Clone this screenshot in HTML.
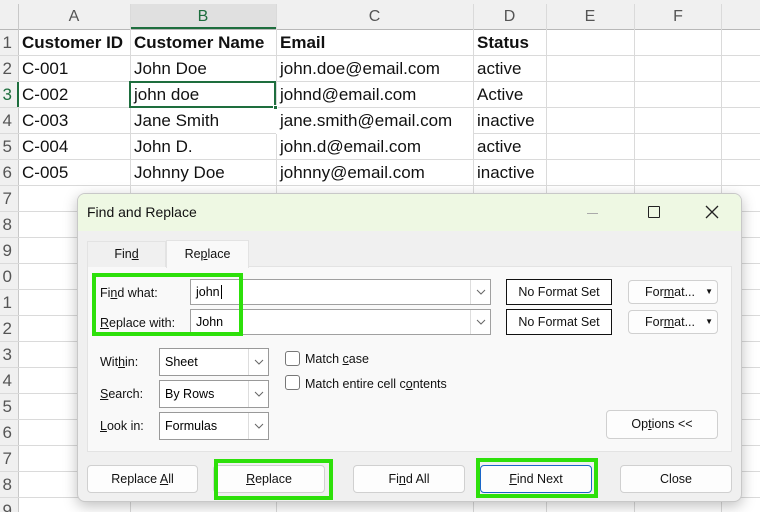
<!DOCTYPE html>
<html><head><meta charset="utf-8"><style>
*{box-sizing:border-box;margin:0;padding:0}
body{width:760px;height:512px;overflow:hidden;background:#fff;font-family:"Liberation Sans",sans-serif;position:relative}
.a{position:absolute}
.vl{position:absolute;top:4px;bottom:0;width:1px;background:#dadada}
.hl{position:absolute;left:0;right:0;height:1px;background:#dadada}
.ch{position:absolute;top:4px;height:25px;line-height:25px;text-align:center;font-size:16px;color:#555;background:#f0f0f0}
.c{position:absolute;font-size:17px;color:#111;height:26px;line-height:26px;padding-left:4px;white-space:nowrap}
.rn{position:absolute;left:-18px;width:30px;text-align:right;font-size:17px;color:#555;height:26px;line-height:26px;padding-right:0}
.d{font-size:12.5px;color:#111}
.btn{position:absolute;background:#fdfdfd;border:1px solid #d0d0d0;border-radius:4px;text-align:center;font-size:12.5px;color:#111}
.inp{position:absolute;background:#fff;border:1px solid #a0a0a0;font-size:12.5px;padding-left:5px}
.dd{position:absolute;right:0;top:0;bottom:0;width:20px;border-left:1px solid #ddd;background:#fff}
.dd svg{position:absolute;left:5px;top:50%;margin-top:-3px}
.gb{position:absolute;border:4px solid #2de00a}
.cb{position:absolute;width:15px;height:15px;border:1px solid #777;border-radius:3px;background:#fff}
u{text-decoration:underline}
</style></head><body>
<div class="a" style="left:0;top:0;width:760px;height:29px;background:#f0f0f0"></div>
<div class="a" style="left:0;top:0;width:18px;height:512px;background:#f0f0f0;overflow:hidden">
<div class="rn" style="top:30px">1</div><div class="rn" style="top:56px">2</div><div class="rn" style="top:82px;color:#1e6e3e">3</div><div class="rn" style="top:108px">4</div><div class="rn" style="top:134px">5</div><div class="rn" style="top:160px">6</div><div class="rn" style="top:186px">7</div><div class="rn" style="top:212px">8</div><div class="rn" style="top:238px">9</div><div class="rn" style="top:264px">0</div><div class="rn" style="top:290px">1</div><div class="rn" style="top:316px">2</div><div class="rn" style="top:342px">3</div><div class="rn" style="top:368px">4</div><div class="rn" style="top:394px">5</div><div class="rn" style="top:420px">6</div><div class="rn" style="top:446px">7</div><div class="rn" style="top:472px">8</div><div class="rn" style="top:498px">9</div>
</div>
<div class="ch" style="left:18px;width:112px">A</div>
<div class="ch" style="left:130px;width:146px;background:#e0e0e0;color:#1e6e3e;border-bottom:2px solid #1e6e3e">B</div>
<div class="ch" style="left:276px;width:197px">C</div>
<div class="ch" style="left:473px;width:73px">D</div>
<div class="ch" style="left:546px;width:88px">E</div>
<div class="ch" style="left:634px;width:88px">F</div>
<div class="a" style="left:0;top:29px;width:760px;height:1px;background:#b8b8b8"></div>
<div class="vl" style="left:18px;background:#c8c8c8"></div>
<div class="vl" style="left:130px"></div><div class="vl" style="left:276px"></div><div class="vl" style="left:473px"></div><div class="vl" style="left:546px"></div><div class="vl" style="left:634px"></div><div class="vl" style="left:721px"></div>
<div class="hl" style="top:55px"></div><div class="hl" style="top:81px"></div><div class="hl" style="top:107px"></div><div class="hl" style="top:133px"></div><div class="hl" style="top:159px"></div><div class="hl" style="top:185px"></div><div class="hl" style="top:211px"></div><div class="hl" style="top:237px"></div><div class="hl" style="top:263px"></div><div class="hl" style="top:289px"></div><div class="hl" style="top:315px"></div><div class="hl" style="top:341px"></div><div class="hl" style="top:367px"></div><div class="hl" style="top:393px"></div><div class="hl" style="top:419px"></div><div class="hl" style="top:445px"></div><div class="hl" style="top:471px"></div><div class="hl" style="top:497px"></div>
<div class="a" style="left:17px;top:82px;width:2px;height:25px;background:#1e6e3e"></div>
<div class="c" style="left:18px;top:30px;font-weight:bold">Customer ID</div>
<div class="c" style="left:130px;top:30px;font-weight:bold">Customer Name</div>
<div class="c" style="left:276px;top:30px;font-weight:bold">Email</div>
<div class="c" style="left:473px;top:30px;font-weight:bold">Status</div>
<div class="c" style="left:18px;top:56px">C-001</div><div class="c" style="left:130px;top:56px">John Doe</div><div class="c" style="left:276px;top:56px">john.doe@email.com</div><div class="c" style="left:473px;top:56px">active</div>
<div class="c" style="left:18px;top:82px">C-002</div><div class="c" style="left:130px;top:82px">john doe</div><div class="c" style="left:276px;top:82px">johnd@email.com</div><div class="c" style="left:473px;top:82px">Active</div>
<div class="c" style="left:18px;top:108px">C-003</div><div class="c" style="left:130px;top:108px">Jane Smith</div><div class="c" style="left:276px;top:108px;background:#fff;width:197px">jane.smith@email.com</div><div class="c" style="left:473px;top:108px">inactive</div>
<div class="c" style="left:18px;top:134px">C-004</div><div class="c" style="left:130px;top:134px">John D.</div><div class="c" style="left:276px;top:134px">john.d@email.com</div><div class="c" style="left:473px;top:134px">active</div>
<div class="c" style="left:18px;top:160px">C-005</div><div class="c" style="left:130px;top:160px">Johnny Doe</div><div class="c" style="left:276px;top:160px">johnny@email.com</div><div class="c" style="left:473px;top:160px">inactive</div>
<div class="a" style="left:129px;top:81px;width:147px;height:27px;border:2px solid #1e6e3e"></div>
<div class="a" style="left:273px;top:105px;width:5px;height:5px;background:#1e6e3e;border:1px solid #fff"></div>

<div class="a" style="left:77px;top:193px;width:665px;height:309px;background:#f0f0f0;border:1px solid #c8c8c8;border-radius:8px;box-shadow:0 4px 14px rgba(0,0,0,.25);overflow:hidden">
  <div class="a" style="left:0;top:0;width:665px;height:37px;background:#eef8e3"></div>
  <div class="a d" style="left:9px;top:10px;font-size:14px">Find and Replace</div>
  <div class="a" style="left:509px;top:19px;width:11px;height:1px;background:#aaa"></div>
  <div class="a" style="left:570px;top:12px;width:12px;height:12px;border:1.5px solid #222;border-radius:1px"></div>
  <svg class="a" style="left:627px;top:11px" width="14" height="14"><path d="M1 1L13 13M13 1L1 13" stroke="#222" stroke-width="1.3"/></svg>
  <div class="a" style="left:9px;top:72px;width:645px;height:186px;background:#f9f9f9;border:1px solid #e3e3e3"></div>
  <div class="a d" style="left:9px;top:47px;width:79px;height:26px;border:1px solid #e3e3e3;border-bottom:none;background:#f0f0f0;text-align:center;line-height:24px">Fin<u>d</u></div>
  <div class="a d" style="left:88px;top:46px;width:83px;height:28px;border:1px solid #e3e3e3;border-bottom:none;background:#f9f9f9;text-align:center;line-height:26px">Re<u>p</u>lace</div>
</div>
<div class="a d" style="left:100px;top:286px">Fi<u>n</u>d what:</div>
<div class="a d" style="left:100px;top:316px"><u>R</u>eplace with:</div>
<div class="inp" style="left:190px;top:279px;width:301px;height:26px;line-height:24px">john<span style="border-left:1px solid #000;margin-left:1px"></span><div class="dd"><svg width="10" height="6"><path d="M1 1L5 5L9 1" fill="none" stroke="#666"/></svg></div></div>
<div class="inp" style="left:190px;top:309px;width:301px;height:26px;line-height:24px">John<div class="dd"><svg width="10" height="6"><path d="M1 1L5 5L9 1" fill="none" stroke="#666"/></svg></div></div>
<div class="a d" style="left:506px;top:279px;width:106px;height:26px;border:1px solid #111;background:#fff;text-align:center;line-height:24px">No Format Set</div>
<div class="a d" style="left:506px;top:309px;width:106px;height:26px;border:1px solid #111;background:#fff;text-align:center;line-height:24px">No Format Set</div>
<div class="btn" style="left:628px;top:280px;width:90px;height:24px;line-height:22px;padding-right:6px">For<u>m</u>at... <span style="font-size:8px;position:absolute;right:4px">&#9660;</span></div>
<div class="btn" style="left:628px;top:310px;width:90px;height:24px;line-height:22px;padding-right:6px">For<u>m</u>at... <span style="font-size:8px;position:absolute;right:4px">&#9660;</span></div>
<div class="gb" style="left:92px;top:273px;width:151px;height:63px"></div>

<div class="a d" style="left:100px;top:355px">Wit<u>h</u>in:</div>
<div class="a d" style="left:100px;top:387px"><u>S</u>earch:</div>
<div class="a d" style="left:100px;top:419px"><u>L</u>ook in:</div>
<div class="inp" style="left:159px;top:348px;width:110px;height:28px;line-height:26px;border-color:#999">Sheet<div class="dd"><svg width="10" height="6"><path d="M1 1L5 5L9 1" fill="none" stroke="#666"/></svg></div></div>
<div class="inp" style="left:159px;top:380px;width:110px;height:28px;line-height:26px;border-color:#999">By Rows<div class="dd"><svg width="10" height="6"><path d="M1 1L5 5L9 1" fill="none" stroke="#666"/></svg></div></div>
<div class="inp" style="left:159px;top:412px;width:110px;height:28px;line-height:26px;border-color:#999">Formulas<div class="dd"><svg width="10" height="6"><path d="M1 1L5 5L9 1" fill="none" stroke="#666"/></svg></div></div>
<div class="cb" style="left:285px;top:351px"></div>
<div class="cb" style="left:285px;top:375px"></div>
<div class="a d" style="left:305px;top:352px">Match <u>c</u>ase</div>
<div class="a d" style="left:305px;top:377px">Match entire cell c<u>o</u>ntents</div>
<div class="btn" style="left:606px;top:410px;width:112px;height:29px;line-height:27px">Op<u>t</u>ions &lt;&lt;</div>

<div class="btn" style="left:87px;top:465px;width:111px;height:28px;line-height:26px">Replace <u>A</u>ll</div>
<div class="btn" style="left:213px;top:465px;width:112px;height:28px;line-height:26px"><u>R</u>eplace</div>
<div class="btn" style="left:353px;top:465px;width:112px;height:28px;line-height:26px">Fi<u>n</u>d All</div>
<div class="btn" style="left:480px;top:465px;width:112px;height:28px;line-height:26px;border-color:#1a66c8"><u>F</u>ind Next</div>
<div class="btn" style="left:620px;top:465px;width:112px;height:28px;line-height:26px">Close</div>
<div class="gb" style="left:214px;top:459px;width:119px;height:41px"></div>
<div class="gb" style="left:476px;top:458px;width:122px;height:40px"></div>
</body></html>
